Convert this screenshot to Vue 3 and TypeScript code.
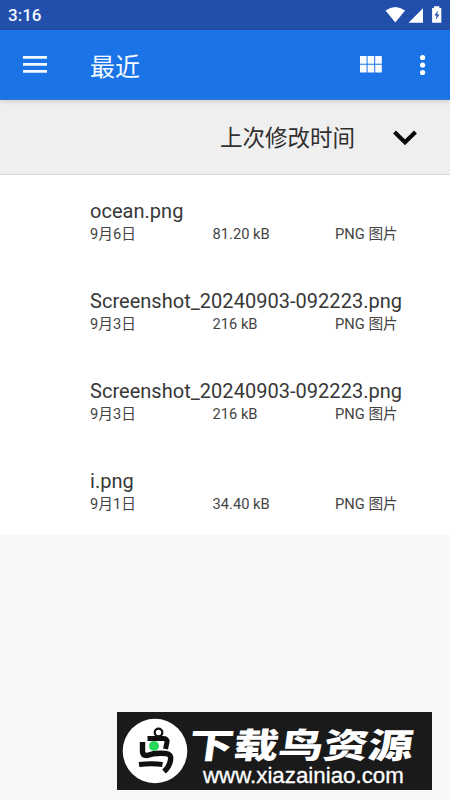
<script setup lang="ts">
interface FileEntry {
  id: number
  name: string
  date: string
  size: string
  kind: string
}

const files: FileEntry[] = [
  { id: 1, name: 'ocean.png', date: '9月6日', size: '81.20 kB', kind: 'PNG 图片' },
  { id: 2, name: 'Screenshot_20240903-092223.png', date: '9月3日', size: '216 kB', kind: 'PNG 图片' },
  { id: 3, name: 'Screenshot_20240903-092223.png', date: '9月3日', size: '216 kB', kind: 'PNG 图片' },
  { id: 4, name: 'i.png', date: '9月1日', size: '34.40 kB', kind: 'PNG 图片' },
]
</script>

<template>
  <div class="screen">
    <div class="status">
      <span class="clock">3:16</span>
      <svg class="status-icons" width="60" height="30" viewBox="0 0 60 30" fill="#fff">
        <path d="M1.500 10.500Q11.300 3.500 21.100 10.500L11.300 22.500Z" />
        <path d="M39 8.300V22.700H24.600Z" />
        <path d="M50 6.300h5.400v1.700h1.900v14.700h-9.200V8H50z" />
        <path d="M54 10.500l-3.700 5h2.300l-.8 4.200 3.700-5.200h-2.300z" fill="#234fac" />
      </svg>
    </div>
    <header class="bar">
      <svg class="menu" width="24" height="17" viewBox="0 0 24 17" fill="#f3faff">
        <path d="M0 0h24v2.700H0zM0 7h24v2.700H0zM0 14h24v2.700H0z" />
      </svg>
      <h1>最近</h1>
      <svg class="grid" width="22" height="17" viewBox="0 0 22 17" fill="#f8fcff">
        <path d="M0 0h6.600v7.800H0zM7.600 0h6.600v7.800H7.600zM15.200 0h6.600v7.800h-6.600zM0 8.800h6.600v7.800H0zM7.600 8.800h6.600v7.800H7.600zM15.200 8.800h6.600v7.800h-6.600z" />
      </svg>
      <svg class="more" width="6" height="22" viewBox="0 0 6 22" fill="#fff">
        <circle cx="2.600" cy="3.500" r="2.600" />
        <circle cx="2.600" cy="11" r="2.600" />
        <circle cx="2.600" cy="18.500" r="2.600" />
      </svg>
    </header>
    <div class="sort">
      <span>上次修改时间</span>
      <svg width="24" height="15" viewBox="0 0 24 15" fill="none" stroke="#080808" stroke-width="4.100">
        <path d="M1.500 2L12 12.300L22.500 2" />
      </svg>
    </div>
    <ul class="files">
      <li v-for="file in files" :key="file.id">
        <div class="name">{{ file.name }}</div>
        <div class="meta">
          <span>{{ file.date }}</span>
          <span>{{ file.size }}</span>
          <span>{{ file.kind }}</span>
        </div>
      </li>
    </ul>
    <div class="brand">
      <svg class="bird" width="66" height="66" viewBox="0 0 66 66" fill="none">
        <circle cx="33" cy="33" r="32.300" fill="#fff" />
        <g stroke="#101010">
          <circle cx="36.500" cy="14.500" r="3.800" stroke-width="2.200" />
          <path d="M25.500 20.500H41Q45.500 20.500 45 24L43.500 31" stroke-width="5" />
          <path d="M20.500 24V33.500Q20.500 37.500 25 37.500Q33 34.500 44 35.500Q49.500 36 48.500 42Q47.500 49 42 53.500" stroke-width="5.400" />
          <path d="M17 46.500Q30 45 40.500 46.500" stroke-width="5" />
        </g>
        <circle cx="32" cy="28" r="5" fill="#26d75a" />
      </svg>
      <div class="brand-text">
        <div class="brand-name">下载鸟资源</div>
        <div class="brand-url">www.xiazainiao.com</div>
      </div>
    </div>
  </div>
</template>

<style>
body {
  background: #f7f7f7;
}
</style>

<style scoped>
.screen {
  position: relative;
  height: 800px;
  overflow: hidden;
  background: #f7f7f7;
  font-family: Roboto, "Noto Sans CJK SC", sans-serif;
  color: #383838;
}
.status {
  height: 30px;
  display: flex;
  align-items: center;
  justify-content: space-between;
  padding: 0 6px 0 8px;
  background: #234fac;
}
.clock {
  color: #f3f8ff;
  font-size: 17px;
  font-weight: 500;
  line-height: 30px;
}
.status-icons {
  overflow: visible;
}
.bar {
  position: relative;
  height: 70px;
  box-sizing: border-box;
  display: flex;
  align-items: center;
  padding: 0 24px 0 23px;
  background: #1b73e8;
  border-bottom: 1px solid #3478cd;
  box-shadow: 0 1px 5px rgba(0, 0, 0, 0.18);
}
h1 {
  flex: 1;
  margin: 0 0 0 43px;
  padding-top: 6px;
  color: #f3faff;
  font-size: 25px;
  font-weight: 400;
  line-height: 36px;
}
.grid {
  margin-right: 38px;
}
.sort {
  height: 75px;
  box-sizing: border-box;
  display: flex;
  align-items: center;
  justify-content: flex-end;
  gap: 38px;
  padding: 1px 33px 0 0;
  background: #efefef;
  border-bottom: 1px solid #d6d6d6;
  font-size: 22.500px;
  color: #303030;
}
.sort span {
  padding-bottom: 3px;
}
.files {
  margin: 0;
  padding: 1px 0 0;
  list-style: none;
  background: #fff;
  height: 359px;
}
.files li {
  height: 90px;
  box-sizing: border-box;
  padding: 23px 0 0 90px;
}
.name {
  font-size: 20px;
  line-height: 24px;
  letter-spacing: 0.030px;
}
.meta {
  display: grid;
  grid-template-columns: 122.500px 122.500px 1fr;
  font-size: 14.700px;
  line-height: 23px;
  color: #444;
}
.brand {
  position: absolute;
  left: 117px;
  top: 712px;
  width: 315px;
  height: 78px;
  box-sizing: border-box;
  display: flex;
  align-items: center;
  padding: 0 0 0 5px;
  background: #1a1a1a;
  color: #fff;
}
.brand-text {
  display: flex;
  flex-direction: column;
  padding-top: 12px;
}
.brand-name {
  margin: 2px 0 -2px 1px;
  font-size: 34.500px;
  font-weight: 900;
  line-height: 38px;
  white-space: nowrap;
  transform: scaleX(1.300) skewX(-6deg);
  transform-origin: left center;
}
.brand-url {
  margin-left: 15px;
  font-family: "Liberation Sans", Arial, sans-serif;
  font-size: 22.300px;
  line-height: 26px;
  -webkit-text-stroke: 0.300px #fff;
}
</style>
